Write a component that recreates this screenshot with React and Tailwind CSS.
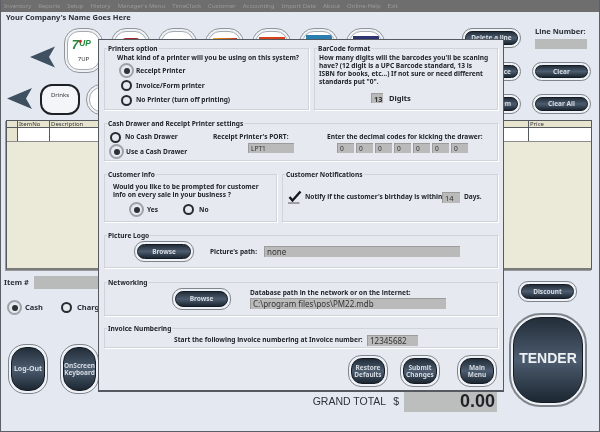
const menuItems = ['Inventory', 'Reports', 'Setup', 'History', "Manager's Menu", 'TimeClock', 'Customer', 'Accounting', 'Import Data', 'About', 'Online-Help', 'Exit'];

function Glossy({ className = '', inner = 'rounded-[8px]', text = 'text-[6.5px]', children }) {
  return (
    <div className={`${className} border border-[#7f858c] bg-[#eef1f5] p-[2px] shrink-0`}>
      <div className={`${inner} h-full w-full border border-[#141a21] bg-linear-to-b from-[#232e3a] via-[#4d5d70] to-[#1c2732] flex items-center justify-center text-center leading-[1.15] font-bold text-[#d5dbe2] ${text}`}>
        {children}
      </div>
    </div>
  );
}

function Radio({ checked }) {
  if (checked) {
    return (
      <span className="w-[15px] h-[15px] rounded-full border-2 border-[#9da2a8] bg-[#e6e9ee] flex items-center justify-center shrink-0">
        <span className="w-[6px] h-[6px] rounded-full bg-[#2d3238]" />
      </span>
    );
  }
  return <span className="block w-[11px] h-[11px] mx-[2px] rounded-full border-[2.5px] border-[#262c33] bg-[#e6e9ee] shrink-0" />;
}

function Field({ className = '', children }) {
  return (
    <div className={`${className} bg-[#bababa] border-t border-l border-[#9c9c9c] text-[#333] flex items-center pl-[2px] shrink-0`}>
      {children}
    </div>
  );
}

function Group({ title, className = '', children }) {
  return (
    <div className={`${className} relative border border-[#cfd4da] shadow-[1px_1px_0_#fff]`}>
      <span className="absolute -top-[5px] left-[2px] bg-[#e6eaf0] px-[1px] text-[6.6px] leading-[9px] font-bold text-[#20262c] whitespace-nowrap">{title}</span>
      {children}
    </div>
  );
}

function Tile({ className = '', children }) {
  return (
    <div className={`${className} border border-[#92969b] rounded-[15px] p-[2px] shrink-0 bg-[#eef1f5]`}>
      <div className="h-full w-full border border-[#a6aaaf] rounded-[12px] bg-white flex flex-col items-center overflow-hidden">
        {children}
      </div>
    </div>
  );
}

function Arrow({ className = '' }) {
  return (
    <svg viewBox="0 0 25 21" className={className}>
      <path d="M0 10.5 L25 0 L19 10.5 L25 21 Z" fill="#3f5060" />
    </svg>
  );
}

export default function App() {
  return (
    <div className="relative w-[600px] h-[432px] overflow-hidden bg-[#e4e9f1] font-['Noto_Sans',sans-serif] text-[#20262c] border-x border-b border-[#5c6066] blur-[0.3px]">
      <div className="h-3 bg-[#6e6e6e] flex items-center pl-[3px] gap-[7px] text-[6px] text-[#9a9a9a]">
        {menuItems.map(m => <span key={m} className="shrink-0">{m}</span>)}
      </div>

      <div className="h-[12px] pl-[5px] flex items-center text-[7.5px] font-bold text-[#2a3036]">Your Company's Name Goes Here</div>

      <div className="flex h-[92px] mt-[4px]">
        <div className="w-[461px] shrink-0">
          <div className="flex h-[45px]">
            <Arrow className="w-[25px] h-[22px] ml-[29px] mt-[18px] shrink-0" />
            <div className="flex gap-[8px] ml-[9px]">
              <Tile className="w-[39px] h-[45px]">
                <svg viewBox="0 0 30 18" className="w-[25px] h-[15px] mt-[5px]">
                  <text x="1" y="14" fontSize="15" fontStyle="italic" fontWeight="700" fill="#1f8a3c" fontFamily="Liberation Sans">7</text>
                  <text x="10" y="11" fontSize="10" fontStyle="italic" fontWeight="700" fill="#1f8a3c" fontFamily="Liberation Sans">UP</text>
                  <circle cx="11" cy="5" r="1.8" fill="#d8232a" />
                </svg>
                <span className="text-[6px] mt-[3px] text-[#333]">7UP</span>
              </Tile>
              <Tile className="w-[39px] h-[45px]"><span className="w-[20px] h-[10px] mt-[6px] rounded-full bg-[#a5262c]" /></Tile>
              <Tile className="w-[39px] h-[45px]"><span className="w-[24px] h-[4px] mt-[8px] bg-[#5b2a2a]" /></Tile>
              <Tile className="w-[39px] h-[45px]"><span className="w-[24px] h-[6px] mt-[6px] bg-linear-to-r from-[#e2a11f] to-[#d3271f]" /></Tile>
              <Tile className="w-[39px] h-[45px]"><span className="w-[26px] h-[7px] mt-[5px] bg-[#d6431a]" /></Tile>
              <Tile className="w-[39px] h-[45px]"><span className="w-[26px] h-[7px] mt-[3px] bg-[#2a7fb0]" /></Tile>
              <Tile className="w-[39px] h-[45px]"><span className="w-[26px] h-[7px] mt-[4px] bg-[#2d3470]" /></Tile>
            </div>
          </div>
          <div className="flex mt-[11px]">
            <Arrow className="w-[25px] h-[21px] ml-[6px] mt-[4px] shrink-0" />
            <div className="flex gap-[6px] ml-[8px]">
              <div className="w-[40px] h-[31px] rounded-[12px] border-[2px] border-[#1d2127] bg-[#f3f5f8] flex justify-center pt-[5px] text-[6px] text-[#333]">Drinks</div>
              <Tile className="w-[40px] h-[31px]" />
            </div>
          </div>
        </div>

        <div className="w-[59px] shrink-0 flex flex-col">
          <Glossy className="w-[59px] h-[20px] rounded-[10px]">Delete a line</Glossy>
          {/* only the tail of these two labels shows past the dialog */}
          <Glossy className="w-[59px] h-[19px] mt-[14px] rounded-[10px]"><span className="w-full text-right pr-[6px]">ce</span></Glossy>
          <Glossy className="w-[59px] h-[20px] mt-[13px] rounded-[10px]"><span className="w-full text-right pr-[6px]">em</span></Glossy>
        </div>

        <div className="ml-[11px] w-[59px] shrink-0 flex flex-col">
          <div className="h-[34px] pl-[3px]">
            <div className="text-[7.5px] font-bold leading-[8px] mt-[-1px] text-[#2a3036] whitespace-nowrap">Line Number:</div>
            <div className="w-[52px] h-[10px] mt-[4px] bg-[#b9bbbb]" />
          </div>
          <Glossy className="w-[59px] h-[19px] rounded-[10px]">Clear</Glossy>
          <Glossy className="w-[59px] h-[20px] mt-[13px] rounded-[10px]">Clear All</Glossy>
        </div>
      </div>

      <div className="ml-[5px] w-[586px] h-[150px] border-t border-x border-[#555a5f] border-b-2 border-b-[#7a7c7c] bg-[#ebe9d8] shadow-[-1px_1px_0_#999]">
        <div className="grid grid-cols-[11px_32px_479px_1fr] h-[7px] bg-[#e7e5cf] border-b border-[#555a5f] text-[6px] leading-[7px] text-[#333]">
          <div className="border-r border-[#555a5f]" />
          <div className="border-r border-[#555a5f] pl-[1px]">ItemNo</div>
          <div className="border-r border-[#555a5f] pl-[1px]">Description</div>
          <div className="pl-[1px]">Price</div>
        </div>
        <div className="grid grid-cols-[11px_32px_479px_1fr] h-[14px] bg-white border-b border-[#8b8d8d]">
          <div className="border-r border-[#555a5f] bg-[#e7e5cf]" />
          <div className="border-r border-[#555a5f]" />
          <div className="border-r border-[#555a5f]" />
          <div />
        </div>
      </div>

      <div className="flex">
        <div className="w-[98px] shrink-0">
          <div className="flex items-center mt-[6px] pl-[3px] h-[13px]">
            <span className="text-[7.5px] font-bold w-[30px] text-[#2a3036]">Item #</span>
            <div className="flex-1 h-[13px] bg-[#b9bbbb]" />
          </div>
          <div className="flex items-center mt-[11px] pl-[6px] h-[15px] text-[7.5px] font-bold text-[#2a3036] whitespace-nowrap">
            <Radio checked />
            <span className="ml-[3px]">Cash</span>
            <span className="ml-[16px]"><Radio /></span>
            <span className="ml-[3px]">Charge</span>
          </div>
          <div className="flex mt-[29px] pl-[7px] gap-[12px]">
            <Glossy className="w-[40px] h-[50px] rounded-[17px]" inner="rounded-[15px]" text="text-[7px]">Log-Out</Glossy>
            <Glossy className="w-[39px] h-[50px] rounded-[17px]" inner="rounded-[15px]" text="text-[6.5px]">OnScreen Keyboard</Glossy>
          </div>
        </div>

        <div className="flex-1 flex justify-end items-start pt-[121px] pr-[12px]">
          <div className="flex items-center h-[21px] text-[#2f3338]">
            <span className="text-[10.5px] whitespace-nowrap font-['Liberation_Sans',sans-serif]">GRAND TOTAL</span>
            <span className="text-[10.5px] ml-[7px] font-['Liberation_Sans',sans-serif]">$</span>
            <div className="w-[93px] h-[21px] ml-[5px] bg-[#bcbebe] flex items-center justify-end pr-[2px] text-[18px] font-bold text-[#1f2226] font-['Liberation_Sans',sans-serif]">0.00</div>
          </div>
        </div>

        <div className="w-[78px] shrink-0 mr-[12px]">
          <Glossy className="w-[59px] h-[21px] ml-[9px] mt-[11px] rounded-[10px]">Discount</Glossy>
          <Glossy className="w-[78px] h-[94px] mt-[11px] rounded-[32px] border-2" inner="rounded-[28px] pb-[3px]" text="text-[14px] text-[#eef1f4] font-['Liberation_Sans',sans-serif]">TENDER</Glossy>
        </div>
      </div>

      {/* settings dialog sits over the sale screen */}
      <div className="absolute left-[97px] top-[39px] w-[406px] h-[353px] bg-[#e6eaf0] border border-[#555a60] border-b-2 pl-[5px] pt-[8px] text-[6.6px] leading-[8px] font-bold text-[#20262c]">
        <div className="flex gap-[5px] h-[62px]">
          <Group title="Printers option" className="w-[205px]">
            <div className="pl-[12px] pt-[5px] whitespace-nowrap">What kind of a  printer will you be using on this system?</div>
            <div className="pl-[14px] pt-[1px] flex flex-col">
              <div className="flex items-center gap-[2px] h-[15px]"><Radio checked />Receipt Printer</div>
              <div className="flex items-center gap-[2px] h-[15px]"><Radio />Invoice/Form printer</div>
              <div className="flex items-center gap-[2px] h-[14px]"><Radio />No Printer (turn off printing)</div>
            </div>
          </Group>
          <Group title="BarCode format" className="w-[184px]">
            <div className="pl-[4px] pt-[5px] whitespace-nowrap">
              How many digits will the barcodes you'll be scaning<br />
              have? (12 digit is a UPC Barcode standard, 13 is<br />
              ISBN for books, etc...)  If not sure or need different<br />
              standards put "0".
            </div>
            <div className="flex items-center pl-[56px] mt-[7px] text-[7.5px]">
              <Field className="w-[12px] h-[10px]">13</Field>
              <span className="ml-[6px]">Digits</span>
            </div>
          </Group>
        </div>

        <Group title="Cash Drawer and Receipt Printer settings" className="w-[394px] h-[38px] mt-[13px] flex">
          <div className="w-[108px] pl-[4px] pt-[6px] shrink-0">
            <div className="flex items-center gap-[2px] h-[14px] -ml-[1px]"><Radio />No Cash Drawer</div>
            <div className="flex items-center gap-[2px] h-[15px]"><Radio checked />Use a Cash Drawer</div>
          </div>
          <div className="w-[114px] pt-[9px] shrink-0">
            <div className="whitespace-nowrap">Receipt Printer's PORT:</div>
            <Field className="w-[46px] h-[10px] ml-[35px] mt-[2px] font-normal">LPT1</Field>
          </div>
          <div className="pt-[9px]">
            <div className="whitespace-nowrap">Enter the decimal codes for kicking the drawer:</div>
            <div className="flex gap-[2px] ml-[10px] mt-[2px]">
              {[0, 1, 2, 3, 4, 5, 6].map(i => <Field key={i} className="w-[17px] h-[10px] font-normal">0</Field>)}
            </div>
          </div>
        </Group>

        <div className="flex gap-[5px] h-[48px] mt-[13px]">
          <Group title="Customer info" className="w-[173px]">
            <div className="pl-[8px] pt-[8px] whitespace-nowrap">
              Would you like to be prompted for customer<br />
              info on every sale in your business ?
            </div>
            <div className="flex items-center pl-[24px] mt-[3px]">
              <Radio checked /><span className="ml-[3px]">Yes</span>
              <span className="ml-[23px]"><Radio /></span><span className="ml-[3px]">No</span>
            </div>
          </Group>
          <Group title="Customer Notifications" className="w-[216px]">
            <div className="flex items-center pl-[4px] pt-[15px] whitespace-nowrap">
              <svg viewBox="0 0 14 14" className="w-[15px] h-[14px] shrink-0">
                <path d="M0.5 13 H12" stroke="#555" strokeWidth="1" />
                <path d="M2 7 L5 10.5 L13 1.5" stroke="#15181c" strokeWidth="2.4" fill="none" />
              </svg>
              <span className="ml-[3px] w-[137px]">Notify if the customer's birthday is within</span>
              <Field className="w-[18px] h-[11px] font-normal text-[7.5px]">14</Field>
              <span className="ml-[4px]">Days.</span>
            </div>
          </Group>
        </div>

        <Group title="Picture Logo" className="w-[394px] h-[33px] mt-[13px] flex items-center">
          <Glossy className="w-[60px] h-[21px] ml-[29px] rounded-[10px]">Browse</Glossy>
          <span className="ml-[16px] w-[54px] whitespace-nowrap">Picture's path:</span>
          <Field className="w-[196px] h-[11px] font-normal text-[8px]">none</Field>
        </Group>

        <Group title="Networking" className="w-[394px] h-[34px] mt-[14px] flex items-center">
          <Glossy className="w-[59px] h-[22px] ml-[67px] rounded-[10px]">Browse</Glossy>
          <div className="ml-[19px]">
            <div className="whitespace-nowrap">Database path in the network or on the internet:</div>
            <Field className="w-[196px] h-[11px] mt-[1px] font-normal text-[8px]">C:\program files\pos\PM22.mdb</Field>
          </div>
        </Group>

        <Group title="Invoice Numbering" className="w-[394px] h-[20px] mt-[12px] flex items-center pl-[69px] pt-[4px]">
          <span className="w-[193px] whitespace-nowrap">Start the following  invoice numbering at Invoice number:</span>
          <Field className="w-[51px] h-[11px] font-normal text-[8px]">12345682</Field>
        </Group>

        <div className="flex justify-end w-[394px] mt-[7px] pr-[1px]">
          <Glossy className="w-[40px] h-[32px] rounded-[13px]" inner="rounded-[11px]">Restore Defaults</Glossy>
          <Glossy className="w-[40px] h-[32px] ml-[12px] rounded-[13px]" inner="rounded-[11px]">Submit Changes</Glossy>
          <Glossy className="w-[40px] h-[32px] ml-[17px] rounded-[13px]" inner="rounded-[11px]">Main Menu</Glossy>
        </div>
      </div>
    </div>
  );
}
